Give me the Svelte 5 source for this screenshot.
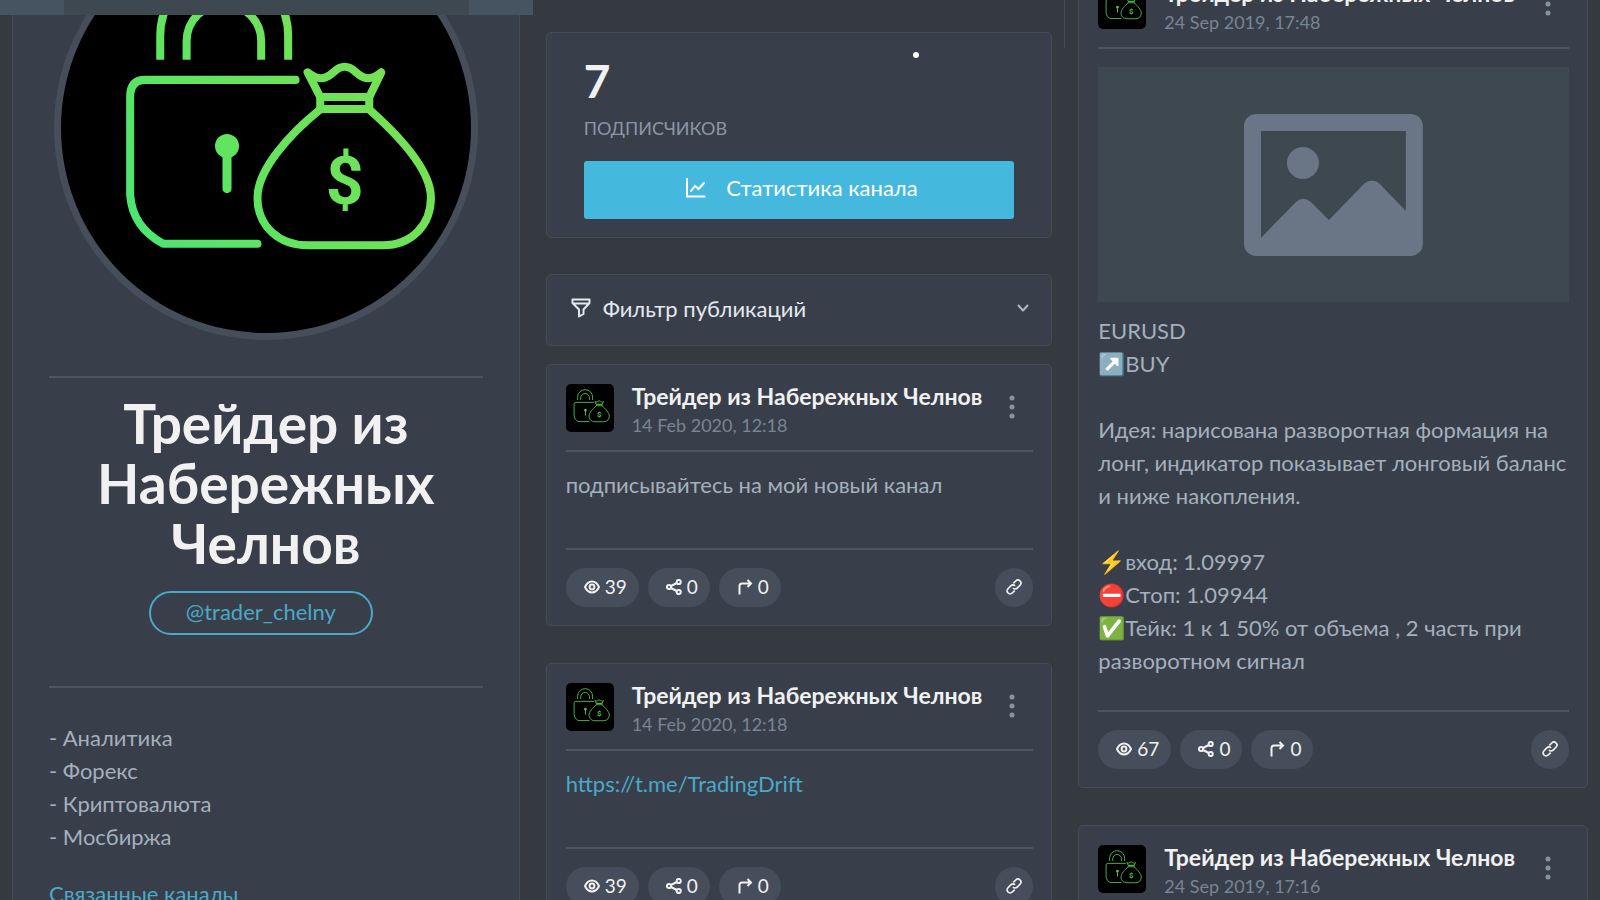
<script lang="ts">
  interface Post {
    id: number;
    date: string;
    lines: string[];
    link?: string;
    image?: boolean;
    views: number;
    shares: number;
    forwards: number;
  }

  const channel = 'Трейдер из Набережных Челнов';
  const topics = ['Аналитика', 'Форекс', 'Криптовалюта', 'Мосбиржа'];

  const recentPosts: Post[] = [
    {
      id: 1,
      date: '14 Feb 2020, 12:18',
      lines: ['подписывайтесь на мой новый канал'],
      views: 39,
      shares: 0,
      forwards: 0
    },
    {
      id: 2,
      date: '14 Feb 2020, 12:18',
      lines: [],
      link: 'https://t.me/TradingDrift',
      views: 39,
      shares: 0,
      forwards: 0
    }
  ];

  const olderPosts: Post[] = [
    {
      id: 3,
      date: '24 Sep 2019, 17:48',
      lines: [
        'EURUSD',
        '↗️BUY',
        '',
        'Идея: нарисована разворотная формация на лонг, индикатор показывает лонговый баланс и ниже накопления.',
        '',
        '⚡вход: 1.09997',
        '⛔Стоп: 1.09944',
        '✅Тейк: 1 к 1 50% от объема , 2 часть при разворотном сигнал'
      ],
      image: true,
      views: 67,
      shares: 0,
      forwards: 0
    },
    {
      id: 4,
      date: '24 Sep 2019, 17:16',
      lines: [],
      views: 64,
      shares: 0,
      forwards: 0
    }
  ];
</script>

{#snippet logo()}
  <svg class="logo" viewBox="0 0 409 409" aria-hidden="true">
    <defs>
      <linearGradient id="green" gradientUnits="userSpaceOnUse" x1="70" y1="320" x2="370" y2="140">
        <stop offset="0" stop-color="#4be572" />
        <stop offset="0.4" stop-color="#62e45f" />
        <stop offset="1" stop-color="#7ce052" />
      </linearGradient>
    </defs>
    <rect width="409" height="409" fill="#000" />
    <g class="lines" fill="none" stroke="url(#green)" stroke-width="8" stroke-linejoin="round">
      <path d="M99 136.500V112a63.800 63.800 0 0 1 127.600 0v24.500" />
      <path d="M125.300 136.500V118a37.200 37.200 0 0 1 74.400 0v18.500" />
      <path d="M234 156.500H84q-15 0-15 17V271q2 32 33 49H196" stroke-linecap="round" />
      <path d="M165.600 226V265" stroke-width="9" stroke-linecap="round" />
      <path
        d="M258.600 173.500L246 149Q256 157 264 154C272 151 274 143.500 283 143.500S294 151 302 154Q310 157 319.500 149L307.500 173.500Z"
      />
      <path d="M258.600 173.500H307.500V185.500H258.600Z" />
      <path
        d="M258.600 186C230 209 196 245 196 274C196 303 218 321.500 246 321.500H321C350 321.500 369 301 369 274C369 246 338 213 307.500 186"
      />
    </g>
    <g class="lines">
      <circle cx="165.600" cy="222.500" r="12" fill="url(#green)" />
      <text x="283" y="280" text-anchor="middle" class="dollar">$</text>
    </g>
  </svg>
{/snippet}

{#snippet postCard(post: Post)}
  <article class="card post">
    <header class="post-header">
      <div class="post-avatar">{@render logo()}</div>
      <div class="post-heading">
        <h5>{channel}</h5>
        <small>{post.date}</small>
      </div>
      <button type="button" class="menu" aria-label="Меню">
        <svg width="6" height="24" viewBox="0 0 6 24">
          <circle cx="3" cy="3" r="2.500" />
          <circle cx="3" cy="12" r="2.500" />
          <circle cx="3" cy="21" r="2.500" />
        </svg>
      </button>
    </header>
    <div class="post-body" class:with-image={post.image}>
      {#if post.image}
        <div class="placeholder">
          <svg viewBox="0 0 179 142" aria-hidden="true">
            <path
              fill-rule="evenodd"
              d="M12 0H167a12 12 0 0 1 12 12V130a12 12 0 0 1-12 12H12A12 12 0 0 1 0 130V12A12 12 0 0 1 12 0ZM17 17V124L52 88Q59.500 81.500 67 88L85 106L120 70Q128 63 136 70L162 97V17Z"
            />
            <circle cx="59" cy="49" r="16" />
          </svg>
        </div>
      {/if}
      {#each post.lines as line}
        <p>{line}</p>
      {/each}
      {#if post.link}
        <p><a href={post.link}>{post.link}</a></p>
      {/if}
    </div>
    <footer class="post-footer">
      <span class="pill">
        <svg width="16" height="16" viewBox="0 0 16 16">
          <path d="M1 8Q3.500 2.500 8 2.500T15 8Q12.500 13.500 8 13.500T1 8Z" />
          <circle cx="8" cy="8" r="2.400" />
        </svg>
        {post.views}
      </span>
      <span class="pill">
        <svg width="16" height="16" viewBox="0 0 16 16">
          <circle cx="3" cy="8" r="2.100" />
          <circle cx="12.700" cy="3" r="2.100" />
          <circle cx="12.700" cy="13" r="2.100" />
          <path d="M5 7L10.800 4M5 9L10.800 12" />
        </svg>
        {post.shares}
      </span>
      <span class="pill">
        <svg width="16" height="16" viewBox="0 0 16 16">
          <path d="M2.500 15.500V7Q2.500 4.500 5 4.500H14M10.500 1L14 4.500L10.500 8" />
        </svg>
        {post.forwards}
      </span>
      <a class="permalink" href="#post-{post.id}" aria-label="Ссылка">
        <svg width="18" height="18" viewBox="0 0 18 18">
          <g transform="rotate(-45 9 9)">
            <path d="M7 12H3.500a3 3 0 0 1 0-6H7.500a3 3 0 0 1 3 3" />
            <path d="M11 6H14.500a3 3 0 0 1 0 6H10.500a3 3 0 0 1-3-3" />
          </g>
        </svg>
      </a>
    </footer>
  </article>
{/snippet}

<div class="page">
  <div class="topbar">
    <div class="topbar-side"></div>
    <div class="topbar-side"></div>
  </div>

  <main class="columns">
    <aside class="card profile">
      <div class="profile-avatar">{@render logo()}</div>
      <div class="profile-title">
        <h1>{channel}</h1>
        <a class="username" href="https://t.me/trader_chelny">@trader_chelny</a>
      </div>
      <div class="about">
        {#each topics as topic}
          <p>- {topic}</p>
        {/each}
      </div>
      <a class="related" href="#related">Связанные каналы</a>
    </aside>

    <section class="feed">
      <div class="card stats">
        <span class="dot"></span>
        <h2>7</h2>
        <p>подписчиков</p>
        <a class="stats-button" href="#stat">
          <svg width="20" height="20" viewBox="0 0 20 20" aria-hidden="true">
            <path d="M1 0V18.500H19.500" />
            <path d="M5 13L9 8L12.500 11L18 5" stroke-linecap="round" />
          </svg>
          Статистика канала
        </a>
      </div>
      <button type="button" class="card filter">
        <svg width="20" height="20" viewBox="0 0 20 20" aria-hidden="true">
          <path d="M1.500 1.500H18.500V5L12.500 11.500V16L8 18.500V11.500L1.500 5ZM2 5.500H18" />
        </svg>
        <span>Фильтр публикаций</span>
        <svg class="chevron" width="12" height="8" viewBox="0 0 12 8" aria-hidden="true">
          <path d="M1 1L6 6.500L11 1" />
        </svg>
      </button>
      {#each recentPosts as post (post.id)}
        {@render postCard(post)}
      {/each}
    </section>

    <section class="feed older">
      {#each olderPosts as post (post.id)}
        {@render postCard(post)}
      {/each}
    </section>
  </main>
</div>

<style>
  :global(body) {
    margin: 0;
    background: #343a40;
  }

  .page {
    position: relative;
    height: 100vh;
    overflow: hidden;
    color: #a5b0bd;
    font-family: Lato, 'Open Sans', sans-serif;
    font-size: 22px;
    line-height: 33px;
  }

  .page :is(h1, h2, h5, p) {
    margin: 0;
  }

  a {
    color: #4aa9c8;
    text-decoration: none;
  }

  button {
    font: inherit;
    cursor: pointer;
  }

  .topbar {
    position: absolute;
    z-index: 1;
    top: 0;
    left: 0;
    display: flex;
    justify-content: space-between;
    width: 33.300%;
    height: 15px;
    background: #3d4851;
  }

  .topbar-side {
    width: 64px;
    background: #455460;
  }

  .columns {
    display: grid;
    grid-template-columns: minmax(0, 508fr) minmax(0, 507fr) minmax(0, 510fr);
    align-items: start;
    gap: 26px;
    padding: 0 12px;
  }

  .card {
    box-sizing: border-box;
    background: #383f4a;
    border: 1px solid #434d58;
    border-radius: 5px;
  }

  /* profile column */
  .profile {
    margin-top: -121px;
    padding: 36px 36px 80px;
  }

  .profile-avatar {
    box-sizing: border-box;
    width: 424px;
    max-width: 100%;
    margin: 0 auto 36px;
    aspect-ratio: 1;
    overflow: hidden;
    border: 7px solid #464e5c;
    border-radius: 50%;
  }

  .logo {
    display: block;
    width: 100%;
    height: 100%;
  }

  .dollar {
    fill: #6ce35a;
    font-family: Roboto, sans-serif;
    font-size: 66px;
    font-weight: 700;
  }

  .profile-title {
    display: flex;
    flex-direction: column;
    align-items: center;
    padding: 15px 0 51px;
    border: solid #4d5561;
    border-width: 2px 0;
  }

  h1 {
    color: #f1f1f1;
    font-size: 55px;
    font-weight: 700;
    line-height: 60px;
    text-align: center;
  }

  .username {
    margin: 18px 10px 0 0;
    padding: 2px 35px 5px;
    border: 2px solid #4aa9c8;
    border-radius: 22px;
  }

  .about {
    padding: 33px 0 24px;
  }

  /* feeds */
  .feed {
    display: flex;
    flex-direction: column;
    padding-top: 32px;
  }

  .older {
    position: relative;
    margin-top: -39px;
    padding-top: 0;
  }

  .older::before {
    content: '';
    position: absolute;
    top: 0;
    left: -14px;
    width: 1px;
    height: 87px;
    background: #434d58;
  }

  .stats {
    position: relative;
    margin-bottom: 36px;
    padding: 23px 37px 18px;
  }

  .dot {
    position: absolute;
    top: 19px;
    right: 132px;
    width: 6px;
    height: 6px;
    background: #fff;
    border-radius: 50%;
  }

  h2 {
    color: #f1f1f1;
    font-size: 46px;
    line-height: 50px;
  }

  .stats p {
    margin: 6px 0 16px;
    color: #8b96a5;
    font-size: 18px;
    text-transform: uppercase;
  }

  .stats-button {
    display: flex;
    align-items: center;
    justify-content: center;
    gap: 20px;
    padding: 10px 0 15px 6px;
    background: #44b9dd;
    border-radius: 3px;
    color: #fff;
  }

  .stats-button svg {
    fill: none;
    stroke: #fff;
    stroke-width: 2;
  }

  .filter {
    display: flex;
    align-items: center;
    gap: 12px;
    height: 72px;
    margin-bottom: 18px;
    padding: 0 22px 4px 24px;
    color: #e3eaef;
    text-align: left;
  }

  .filter svg {
    fill: none;
    stroke: #e3eaef;
    stroke-width: 2;
    stroke-linejoin: round;
  }

  .filter .chevron {
    margin-left: auto;
    stroke: #aab8c5;
  }

  .post {
    margin-bottom: 37px;
    padding: 19px 18px 18px 19px;
  }

  .post-header {
    display: flex;
    align-items: flex-start;
    gap: 18px;
    padding-bottom: 8px;
    border-bottom: 2px solid #4d5561;
  }

  .post-avatar {
    flex: none;
    width: 48px;
    height: 48px;
    overflow: hidden;
    border-radius: 5px;
  }

  .post-avatar .lines {
    opacity: 0.800;
  }

  .post-heading {
    display: flex;
    flex: 1;
    flex-direction: column;
    min-width: 0;
    white-space: nowrap;
  }

  h5 {
    color: #f1f1f1;
    font-size: 23px;
    font-weight: 700;
    line-height: 24px;
  }

  small {
    color: #788594;
    font-size: 18px;
    line-height: 34px;
  }

  .menu {
    display: flex;
    flex: none;
    align-items: center;
    height: 46px;
    padding: 0 18px 0 0;
    background: none;
    border: 0;
  }

  .menu svg {
    fill: #8793a3;
  }

  .post-body {
    min-height: 60px;
    padding: 16px 0 20px;
  }

  .post-body.with-image {
    padding: 18px 0 33px;
  }

  .post-body p {
    min-height: 33px;
  }

  .placeholder {
    display: flex;
    align-items: center;
    justify-content: center;
    margin-bottom: 12px;
    aspect-ratio: 2;
    background: #3e4851;
  }

  .placeholder svg {
    width: 38%;
    fill: #6a7685;
  }

  .post-footer {
    display: flex;
    gap: 9px;
    padding-top: 18px;
    border-top: 2px solid #4d5561;
  }

  .pill,
  .permalink {
    display: flex;
    align-items: center;
    gap: 5px;
    box-sizing: border-box;
    height: 39px;
    padding: 0 12px 2px 18px;
    background: #464d5b;
    border-radius: 20px;
    color: #f1f1f1;
    font-size: 19px;
  }

  .permalink {
    justify-content: center;
    width: 38px;
    margin-left: auto;
    padding: 0 0 2px;
  }

  .pill svg,
  .permalink svg {
    fill: none;
    stroke: #f1f1f1;
    stroke-width: 2;
  }

  .permalink svg {
    stroke-width: 1.700;
  }
</style>
